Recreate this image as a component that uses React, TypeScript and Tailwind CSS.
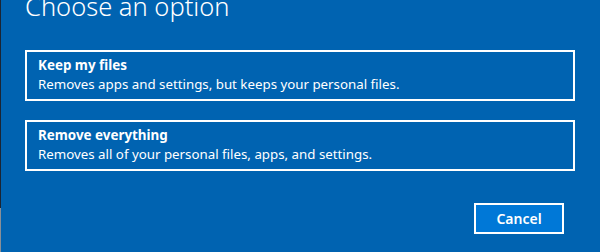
export default function App() {
  const options = [
    {
      title: "Keep my files",
      desc: "Removes apps and settings, but keeps your personal files.",
    },
    {
      title: "Remove everything",
      desc: "Removes all of your personal files, apps, and settings.",
    },
  ];

  return (
    <div className="flex w-[600px] h-[252px] overflow-hidden bg-[#0063b1] font-['Noto_Sans',sans-serif] text-white">
      <div className="flex flex-col w-px shrink-0">
        <div className="h-[208px] bg-[#1b2533]" />
        <div className="flex-1 bg-[#8a8f96]" />
      </div>
      <div className="flex flex-col flex-1 pl-6 pr-6">
        <h1 className="-mt-[12px] h-[62px] text-[25.5px] font-light leading-[36px]">
          Choose an option
        </h1>
        <div className="flex flex-col gap-[19px] w-[550px]">
          {options.map((o) => (
            <div
              key={o.title}
              className="h-[51px] border-2 border-white pl-[11px] pt-[4px]"
            >
              <p className="text-[13.4px] font-bold leading-[19px]">{o.title}</p>
              <p className="text-[13.3px] leading-[19px]">{o.desc}</p>
            </div>
          ))}
        </div>
        <div className="flex justify-end w-[539px] mt-[32px]">
          <button className="w-[90px] h-[31px] border-2 border-white bg-[#0078d7] text-[14px] font-semibold">
            Cancel
          </button>
        </div>
      </div>
    </div>
  );
}
